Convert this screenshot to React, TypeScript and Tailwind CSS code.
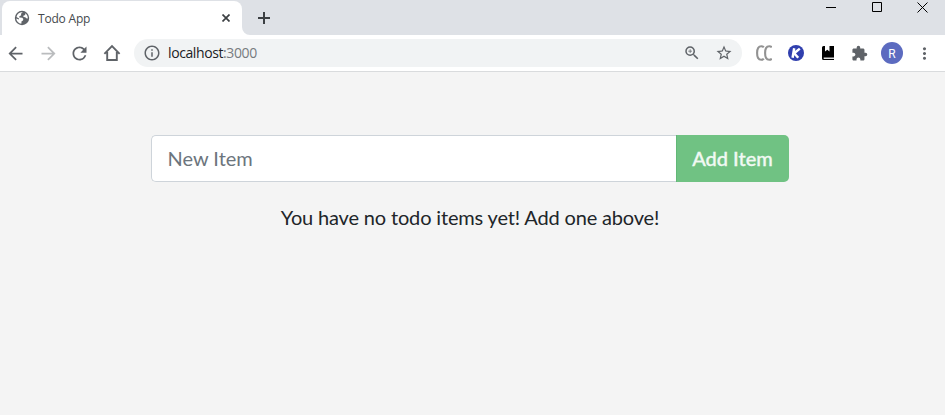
import type { ReactNode } from 'react';
import { MdArrowBack, MdArrowForward, MdRefresh, MdExtension, MdMoreVert, MdStarBorder, MdInfoOutline, MdZoomIn } from 'react-icons/md';

function Cell({ children }: { children: ReactNode }) {
  return <div className="flex h-9 w-8 shrink-0 items-center justify-center">{children}</div>;
}

function Globe() {
  return (
    <svg className="h-4 w-4 shrink-0" viewBox="0 0 16 16">
      <circle cx="8" cy="8" r="7.2" fill="#5f6368" />
      <path d="M8.8 2.3 7 3.7 7.2 5.2 5.2 6.4 5.3 7.6 8.3 7.8 9.3 9 9 10.4 7.6 11.2 7.3 13.8C4.6 13.5 2.4 11.4 2.3 8.6L5 9.4 5 8.4 2.5 7C3 4 5.7 1.9 8.8 2.3Z" fill="#fff" />
      <path d="M11.2 3.2C13 4.4 13.9 6.3 13.8 8.4L12.2 8.2 11.3 7.2 9.5 7 9.3 5.7 11.2 5Z" fill="#fff" />
    </svg>
  );
}

function TabStrip() {
  return (
    <div className="flex h-[35px] bg-[#dee1e6] pl-0.5">
      <div className="relative mt-px flex h-[34px] w-60 items-center rounded-t-lg bg-white pl-3">
        <svg className="absolute bottom-0 -right-2 h-2 w-2" viewBox="0 0 8 8">
          <path d="M0 0A8 8 0 0 0 8 8H0Z" fill="#fff" />
        </svg>
        <Globe />
        <span className="mt-px ml-2 flex-1 text-[12px] leading-4 tracking-[-0.2px] text-[#45494d]">Todo App</span>
        <svg className="mr-3 h-2 w-2" viewBox="0 0 8 8" stroke="#3c4043" strokeWidth="1.7">
          <path d="M.5.5l7 7M7.5.5l-7 7" />
        </svg>
      </div>
      <svg className="mt-3 ml-4 h-3 w-3" viewBox="0 0 12 12" stroke="#3c4043" strokeWidth="2">
        <path d="M0 6h12M6 0v12" />
      </svg>
      <div className="ml-auto flex h-[15px] w-[137px] shrink-0 items-center">
        <div className="flex w-[46px] justify-center">
          <svg className="h-[11px] w-[11px]" viewBox="0 0 11 11"><path d="M0 5.5h10" stroke="#000" /></svg>
        </div>
        <div className="flex w-[46px] justify-center">
          <svg className="h-[11px] w-[11px]" viewBox="0 0 11 11"><path d="M.5.5h9v9h-9z" stroke="#000" fill="none" /></svg>
        </div>
        <div className="flex w-[45px] justify-center">
          <svg className="h-[11px] w-[11px]" viewBox="0 0 11 11"><path d="M.5.5l10 10M10.5.5l-10 10" stroke="#000" /></svg>
        </div>
      </div>
    </div>
  );
}

function Toolbar() {
  return (
    <div className="flex h-[37px] border-b border-[#d9dbdd] bg-white text-[#5f6368]">
      <Cell><MdArrowBack size={21} className="mr-px" /></Cell>
      <Cell><MdArrowForward size={21} color="#babcbe" /></Cell>
      <Cell><MdRefresh size={21} className="mr-px" /></Cell>
      <Cell>
        <svg className="h-[18px] w-[18px]" viewBox="0 0 18 18" fill="none" stroke="#5f6368" strokeWidth="1.9">
          <path d="M1.4 9.8 9 2.2l7.6 7.6M4.2 8v8h9.6V8" />
        </svg>
      </Cell>
      <div className="mt-1 ml-1.5 flex h-7 w-[608px] items-center rounded-full bg-[#f1f3f4]">
        <MdInfoOutline className="ml-[9px]" size={18} />
        <span className="ml-[7px] flex-1 text-[14px] leading-5 tracking-[-0.4px] text-[#202124]">
          localhost<span className="text-[#777b7f]">:3000</span>
        </span>
        <div className="mr-0.5 flex">
          <div className="flex w-8 justify-center"><MdZoomIn size={18} /></div>
          <div className="flex w-8 justify-center"><MdStarBorder size={18} /></div>
        </div>
      </div>
      <div className="ml-1.5 flex">
        <Cell>
          <svg className="h-4 w-4" viewBox="0 0 16 16" fill="none" stroke="#929292" strokeWidth="2.1">
            <path d="M7.8 2.3C7.2 1.5 6.4 1.2 5.3 1.2 2.2 1.2 1.1 3.8 1.1 8s1.1 6.8 4.2 6.8c1.1 0 1.9-.3 2.5-1.1M15.8 2.3c-.6-.8-1.4-1.1-2.5-1.1C10.2 1.2 9.1 3.8 9.1 8s1.1 6.8 4.2 6.8c1.1 0 1.9-.3 2.5-1.1" />
          </svg>
        </Cell>
        <Cell>
          <svg className="h-4 w-4" viewBox="0 0 16 16">
            <circle cx="8" cy="8" r="8" fill="#303fae" />
            <path d="M6.2 3.2 4.6 12.8M11.8 3.6 6.2 8.2 10.2 12.8" stroke="#fff" strokeWidth="2.5" fill="none" />
          </svg>
        </Cell>
        <Cell>
          <svg className="h-4 w-4" viewBox="0 0 16 16">
            <path d="M3.5 1H5v5.5l2.3-1.7 2.2 1.7V1H14v14H3.5Q2 15 2 13.5v-11Q2 1 3.5 1Z" fill="#000" />
            <path d="M3.7 12.5H14V14H3.7Z" fill="#ddd" />
          </svg>
        </Cell>
        <Cell><MdExtension size={17} className="mr-px" /></Cell>
        <Cell>
          <div className="flex h-[22px] w-[22px] items-center justify-center rounded-full bg-[#5c6bc0] pt-px font-[Roboto] text-[12px] text-white">R</div>
        </Cell>
        <Cell><MdMoreVert size={19} /></Cell>
      </div>
    </div>
  );
}

export default function App() {
  return (
    <div className="h-[415px] w-[945px] overflow-hidden bg-[#f4f4f4] font-['Open_Sans',sans-serif]">
      <TabStrip />
      <Toolbar />
      <main className="pt-[63px] pl-[151px] font-[Lato,sans-serif] text-[20px] text-[#212529]">
        <div className="flex h-[47px] w-[638px]">
          <input
            className="w-[525px] rounded-l-[5px] border border-r-0 border-[#ced4da] bg-white pr-4 pb-0.5 pl-[15.5px] outline-none placeholder:text-[#6c757d] placeholder:opacity-100"
            placeholder="New Item"
          />
          <button className="w-[113px] rounded-r-[5px] border-l border-[#62b877] bg-[#70c283] pr-px pb-0.5 font-medium text-[#f1f9f3] [-webkit-text-stroke:0.35px_#f1f9f3]">Add Item</button>
        </div>
        <p className="mt-5 w-[638px] text-center leading-[30px] tracking-[-0.16px]">You have no todo items yet! Add one above!</p>
      </main>
    </div>
  );
}
